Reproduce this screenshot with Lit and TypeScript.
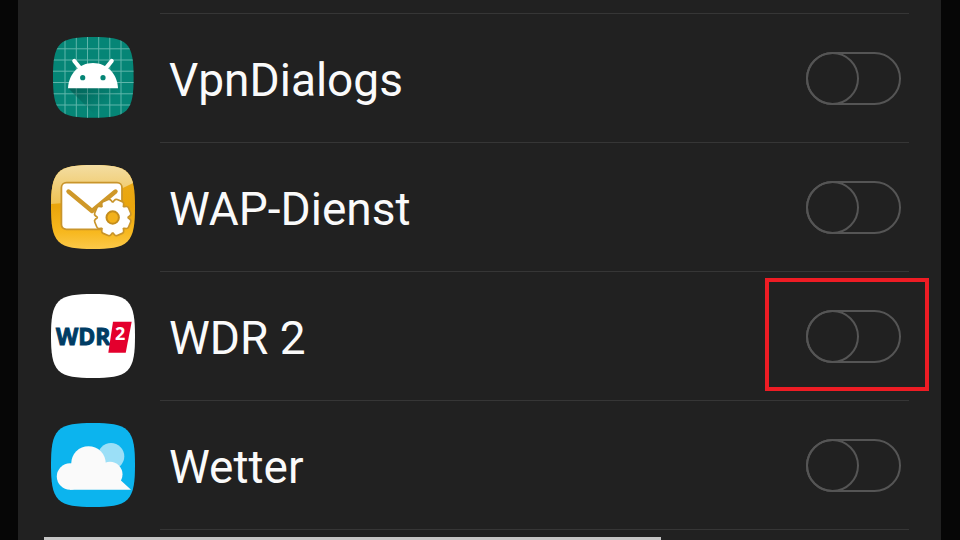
import { LitElement, html, css, svg, nothing } from "lit";
import { customElement, state } from "lit/decorators.js";

const SQUIRCLE =
  "M42 0C58 0 70 1 76.5 7.5S84 26 84 42 83 70 76.5 76.5 58 84 42 84 14 83 7.5 76.5 0 58 0 42 1 14 7.5 7.5 26 0 42 0Z";

/** Outline of an eight-toothed gear around (cx, cy). */
function gearPath(cx: number, cy: number, outer: number, inner: number): string {
  const points: string[] = [];
  for (let i = 0; i < 8; i++) {
    const mid = (i + 0.5) * (Math.PI / 4);
    for (const [offset, r] of [[-0.29, inner], [-0.17, outer], [0.17, outer], [0.29, inner]]) {
      const a = mid + offset;
      points.push(`${(cx + r * Math.cos(a)).toFixed(2)} ${(cy + r * Math.sin(a)).toFixed(2)}`);
    }
  }
  return `M${points.join("L")}Z`;
}

const GEAR = gearPath(61.7, 52.5, 16.2, 13.2);

const androidIcon = svg`
  <defs>
    <clipPath id="tile"><path transform="translate(2 1) scale(.96)" d=${SQUIRCLE} /></clipPath>
    <linearGradient id="shade" gradientUnits="userSpaceOnUse" x1="30" y1="48" x2="52" y2="72">
      <stop offset="0" stop-color="#003a34" stop-opacity=".4" />
      <stop offset="1" stop-color="#003a34" stop-opacity="0" />
    </linearGradient>
  </defs>
  <g clip-path="url(#tile)">
    <path fill="#058576" d="M0 0H84V84H0Z" />
    <path fill="none" stroke="#5fb5aa" stroke-width="1"
      d="M14 0V84M25.3 0V84M36.5 0V84M47.7 0V84M58.8 0V84M70 0V84M0 12.8H84M0 24H84M0 35.2H84M0 46.5H84M0 57.8H84M0 69H84" />
    <path fill="url(#shade)" d="M17 52L47 82H84V68L67 51Z" />
  </g>
  <path fill="#fff" d="M17 52.3C17.6 38 28 27 42 27S66.4 38 67 52.3Z" />
  <path stroke="#fff" stroke-width="4.2" stroke-linecap="round" d="M23.3 25L29 32M60.7 25L55 32" />
  <circle cx="31.7" cy="41.7" r="2.6" fill="#058576" />
  <circle cx="52" cy="41.7" r="2.6" fill="#058576" />`;

const wapIcon = svg`
  <defs>
    <linearGradient id="gold" x1="0" y1="0" x2="0" y2="1">
      <stop offset="0" stop-color="#e9ab1c" />
      <stop offset=".5" stop-color="#eaa50c" />
      <stop offset=".8" stop-color="#f7b81f" />
      <stop offset="1" stop-color="#fbc94a" />
    </linearGradient>
    <linearGradient id="gloss" x1="0" y1="0" x2="0" y2="1">
      <stop offset="0" stop-color="#f3dda2" />
      <stop offset="1" stop-color="#efc253" />
    </linearGradient>
    <clipPath id="wap"><path d=${SQUIRCLE} /></clipPath>
  </defs>
  <g clip-path="url(#wap)">
    <path fill="url(#gold)" d="M0 0H84V84H0Z" />
    <path fill="url(#gloss)" d="M0 0H84V17C64 28 35 37 0 39Z" />
  </g>
  <rect x="10.4" y="17.7" width="60.6" height="46.6" rx="5" fill="#fff" stroke="#c9952b" stroke-width="1.8" />
  <path fill="none" stroke="#cf9828" stroke-width="4.4" stroke-linecap="round" stroke-linejoin="round"
    d="M17.5 26.5L41 46L64.5 26.5" />
  <path fill="#c9952b" stroke="#c9952b" stroke-width="6.4" stroke-linejoin="round" d=${GEAR} />
  <path fill="#fff" stroke="#fff" stroke-width="3" stroke-linejoin="round" d=${GEAR} />
  <circle cx="61.7" cy="52.5" r="6.2" fill="#f2b11c" stroke="#c48d1c" stroke-width="2" />`;

const wdrIcon = svg`
  <path fill="#fff" d=${SQUIRCLE} />
  <text class="wdr" x="5" y="50.5">WDR</text>
  <path fill="#e4002d" d="M62 27.7H80.7L74.7 58.7H57.3Z" />
  <text class="two" x="64" y="46">2</text>`;

const weatherIcon = svg`
  <path fill="#0cb4ee" d=${SQUIRCLE} />
  <circle cx="60" cy="33.3" r="13.3" fill="#9bdff7" />
  <g fill="#fafafa">
    <circle cx="19" cy="53.5" r="13.2" />
    <circle cx="37.5" cy="40.5" r="17.3" />
    <circle cx="59" cy="51.3" r="12.5" />
    <path d="M19 45H60L70.5 58L80 66.7H19Z" />
  </g>`;

@customElement("app-root")
export class AppRoot extends LitElement {
  @state() private apps = [
    { id: "vpn", name: "VpnDialogs", icon: androidIcon, on: false, marked: false },
    { id: "wap", name: "WAP-Dienst", icon: wapIcon, on: false, marked: false },
    { id: "wdr", name: "WDR 2", icon: wdrIcon, on: false, marked: true },
    { id: "weather", name: "Wetter", icon: weatherIcon, on: false, marked: false },
  ];

  static styles = css`
    :host {
      display: block;
      height: 100vh;
      overflow: hidden;
      background: #060606;
      color: #fafafa;
      font-family: Roboto, "Liberation Sans", sans-serif;
    }
    .panel {
      min-height: 100vh;
      box-sizing: border-box;
      margin: 0 19px 0 18px;
      padding-top: 13px;
      background: #212121;
    }
    .list {
      list-style: none;
      margin: 0;
      padding: 0 32px 0 33px;
    }
    .row {
      display: flex;
      align-items: center;
    }
    .icon {
      flex: none;
      width: 84px;
      height: 84px;
      margin-right: 25px;
    }
    .body {
      flex: 1;
      display: flex;
      align-items: center;
      justify-content: space-between;
      height: 128px;
      padding: 0 8px 0 9px;
      border-top: 1px solid #363636;
    }
    .row:last-child .body {
      border-bottom: 1px solid #363636;
    }
    .name {
      padding-top: 4px;
      font-size: 46px;
      line-height: 56px;
    }
    .control {
      position: relative;
      display: flex;
    }
    .switch {
      appearance: none;
      box-sizing: border-box;
      width: 95px;
      height: 53px;
      margin: 0;
      border: 2px solid #555;
      border-radius: 27px;
      cursor: pointer;
    }
    .switch::before {
      content: "";
      display: block;
      box-sizing: border-box;
      width: 53px;
      height: 53px;
      margin: -2px;
      border: 2px solid #555;
      border-radius: 50%;
    }
    .switch:checked {
      background: #2a6fd6;
    }
    .switch:checked::before {
      margin-left: 40px;
      background: #fafafa;
    }
    .marker {
      position: absolute;
      inset: -32px -28px -28px -41px;
      border: 4px solid #ee1c24;
      pointer-events: none;
    }
    .strip {
      width: 67%;
      height: 4px;
      margin: 7px 0 0 26px;
      max-width: 617px;
      background: #c6c6c6;
    }
    .wdr {
      font: 700 23px "Open Sans", "Noto Sans", sans-serif;
      fill: #003c64;
      stroke: #003c64;
      stroke-width: 1px;
    }
    .two {
      font: 700 18px "Open Sans", "Noto Sans", sans-serif;
      fill: #fff;
    }
  `;

  private toggle(id: string) {
    this.apps = this.apps.map((app) => (app.id === id ? { ...app, on: !app.on } : app));
  }

  render() {
    return html`
      <main class="panel">
        <ul class="list">
          ${this.apps.map(
            (app) => html`
              <li class="row">
                <svg class="icon" viewBox="0 0 84 84" aria-hidden="true">${app.icon}</svg>
                <div class="body">
                  <label class="name" for=${app.id}>${app.name}</label>
                  <span class="control">
                    <input
                      class="switch"
                      type="checkbox"
                      role="switch"
                      id=${app.id}
                      .checked=${app.on}
                      @change=${() => this.toggle(app.id)}
                    />
                    ${app.marked ? html`<span class="marker"></span>` : nothing}
                  </span>
                </div>
              </li>
            `,
          )}
        </ul>
        <div class="strip"></div>
      </main>
    `;
  }
}
